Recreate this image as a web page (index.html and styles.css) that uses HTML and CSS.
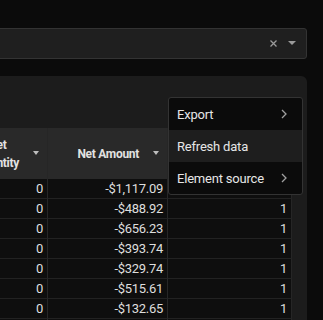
FILE: index.html
```html
<!DOCTYPE html>
<html lang="en">
<head>
    <meta charset="UTF-8">
    <title>Dataframe</title>
    <link rel="stylesheet" href="styles.css">
</head>
<body>
    <div class="select">
        <span class="select-value"></span>
        <svg class="select-clear" width="7" height="7" viewBox="0 0 7 7"><path d="M0.5 0.5 L6.5 6.5 M6.5 0.5 L0.5 6.5" stroke="#9a9a9a" stroke-width="1.3"/></svg>
        <svg class="select-caret" width="8" height="4" viewBox="0 0 8 4"><path d="M0 0 H8 L4 4 Z" fill="#9a9a9a"/></svg>
    </div>

    <div class="panel">
        <div class="toolbar"></div>
        <div class="grid">
            <div class="cell head"><span class="label">Net<br>Quantity</span><span class="caret"></span></div>
            <div class="cell head"><span class="label">Net Amount</span><span class="caret"></span></div>
            <div class="cell head"><span class="label">Count</span><span class="caret"></span></div>

            <div class="cell">0</div><div class="cell">-$1,117.09</div><div class="cell">1</div>
            <div class="cell">0</div><div class="cell">-$488.92</div><div class="cell">1</div>
            <div class="cell">0</div><div class="cell">-$656.23</div><div class="cell">1</div>
            <div class="cell">0</div><div class="cell">-$393.74</div><div class="cell">1</div>
            <div class="cell">0</div><div class="cell">-$329.74</div><div class="cell">1</div>
            <div class="cell">0</div><div class="cell">-$515.61</div><div class="cell">1</div>
            <div class="cell">0</div><div class="cell">-$132.65</div><div class="cell">1</div>
            <div class="cell">0</div><div class="cell">-$874.10</div><div class="cell">1</div>
        </div>

        <div class="menu">
            <div class="menu-item">Export <svg width="6" height="10" viewBox="0 0 6 10"><path d="M1 1 L5 5 L1 9" fill="none" stroke="#a0a0a0" stroke-width="1.3"/></svg></div>
            <div class="menu-item active">Refresh data</div>
            <div class="menu-item">Element source <svg width="6" height="10" viewBox="0 0 6 10"><path d="M1 1 L5 5 L1 9" fill="none" stroke="#a0a0a0" stroke-width="1.3"/></svg></div>
        </div>
    </div>
</body>
</html>
```

FILE: styles.css
```css
html, body {
    margin: 0;
    height: 320px;
    overflow: hidden;
}
body {
    background-color: #0b0b0b;
    font-family: Roboto, "Liberation Sans", sans-serif;
    color: #dedede;
    padding-top: 28px;
    box-sizing: border-box;
}
.select {
    display: flex;
    align-items: center;
    height: 31px;
    margin: 0 16px 0 -60px;
    background-color: #1f1f1f;
    border: 1px solid #333;
    border-radius: 3px;
    box-sizing: border-box;
    padding-right: 10px;
}
.select-value {
    flex: 1;
}
.select-clear {
    margin-right: 11px;
}
.select-caret {
    margin-top: -1px;
}
.panel {
    position: relative;
    margin: 17px 16px 0 -60px;
    padding: 0 15px 0 16px;
    background-color: #1c1c1c;
    border-radius: 6px;
}
.toolbar {
    height: 52px;
}
.grid {
    display: grid;
    grid-template-columns: 92px 120px 124px;
    background-color: #0e0e0e;
}
.cell {
    height: 20px;
    box-sizing: border-box;
    border-right: 1px solid #262626;
    border-bottom: 1px solid #222;
    text-align: right;
    padding-right: 4px;
    font-size: 13px;
    letter-spacing: -0.3px;
    line-height: 19px;
}
.cell.head {
    height: 51px;
    background-color: #292929;
    border-bottom: none;
    display: flex;
    align-items: center;
    justify-content: flex-end;
    gap: 14px;
    padding-right: 8px;
    font-size: 12px;
    font-weight: 700;
    line-height: 18px;
    color: #e2e2e2;
}
.label {
    text-align: center;
}
.caret {
    width: 0;
    height: 0;
    border-left: 3.5px solid transparent;
    border-right: 3.5px solid transparent;
    border-top: 4px solid #bdbdbd;
    margin-top: -1px;
}
.menu {
    position: absolute;
    top: 21px;
    right: 4px;
    width: 135px;
    background-color: #0b0b0b;
    border: 1px solid #333;
    border-radius: 3px;
    box-sizing: border-box;
}
.menu-item {
    display: flex;
    align-items: center;
    justify-content: space-between;
    height: 32px;
    padding: 0 15px 0 8px;
    font-size: 13px;
    letter-spacing: -0.2px;
    color: #e6e6e6;
}
.menu-item.active {
    background-color: #1e1e1e;
}
```
